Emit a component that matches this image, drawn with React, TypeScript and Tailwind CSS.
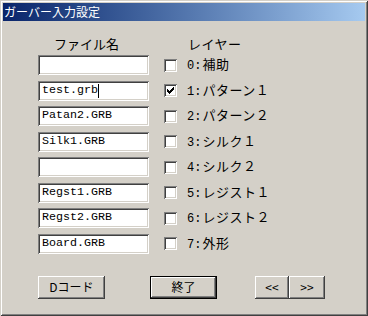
import React from "react";

const sunken =
  "shadow-[inset_1px_1px_#808080,inset_-1px_-1px_#ffffff,inset_2px_2px_#404040,inset_-2px_-2px_#d4d0c8]";
const raised =
  "shadow-[inset_-1px_-1px_#404040,inset_1px_1px_#ffffff,inset_-2px_-2px_#808080,inset_2px_2px_#d4d0c8]";

interface Row {
  file: string;
  num: string;
  name: string;
  checked?: boolean;
  focused?: boolean;
}

const rows: Row[] = [
  { file: "", num: "0:", name: "補助" },
  { file: "test.grb", num: "1:", name: "パターン１", checked: true, focused: true },
  { file: "Patan2.GRB", num: "2:", name: "パターン２" },
  { file: "Silk1.GRB", num: "3:", name: "シルク１" },
  { file: "", num: "4:", name: "シルク２" },
  { file: "Regst1.GRB", num: "5:", name: "レジスト１" },
  { file: "Regst2.GRB", num: "6:", name: "レジスト２" },
  { file: "Board.GRB", num: "7:", name: "外形" },
];

function Checkbox({ checked }: { checked?: boolean }) {
  return (
    <div className={`w-[13px] h-[13px] bg-white ${sunken} flex items-center justify-center`}>
      {checked && (
        <svg width="7" height="7" viewBox="0 0 7 7" shapeRendering="crispEdges">
          <path d="M0 2h1v1h1v1h1v-1h1v-1h1v-1h1v-1h1v3h-1v1h-1v1h-1v1h-1v1h-1v-1h-1v-1h-1v-1h-1z" fill="#000" />
        </svg>
      )}
    </div>
  );
}

function Button({ children, w, isDefault }: { children: React.ReactNode; w: string; isDefault?: boolean }) {
  const inner = (
    <div className={`h-full w-full bg-[#d4d0c8] ${raised} flex items-center justify-center text-[12px] text-black`}>
      {children}
    </div>
  );
  if (isDefault) {
    return <div className={`${w} h-[23px] border border-black`}>{inner}</div>;
  }
  return <div className={`${w} h-[23px]`}>{inner}</div>;
}

export default function App() {
  return (
    <div
      className={`w-[368px] h-[316px] bg-[#d4d0c8] p-[3px] shadow-[inset_1px_1px_#d4d0c8,inset_-1px_-1px_#404040,inset_2px_2px_#ffffff,inset_-2px_-2px_#808080] font-['Noto_Sans_CJK_JP',sans-serif]`}
    >
      <div className="h-[18px] bg-gradient-to-r from-[#0a246a] to-[#a6caf0] pl-[1px] text-[12px] leading-[18px] text-white">
        ガーバー入力設定
      </div>

      <div className="flex mt-[14px] h-[17px] text-[13px] leading-[17px] text-black">
        <div className="ml-[51px] w-[134px]">ファイル名</div>
        <div className="tracking-[0.5px]">レイヤー</div>
      </div>

      <div className="flex flex-col gap-[5.5px] mt-[3px] ml-[35px]">
        {rows.map((r, i) => (
          <div key={i} className="flex items-center h-[20px]">
            <div
              className={`w-[111px] h-[20px] bg-white ${sunken} pl-[4px] flex items-center font-['Liberation_Mono',monospace] text-[11.67px] text-black`}
            >
              <span>{r.file}</span>
              {r.focused && <span className="w-[1px] h-[14px] bg-black" />}
            </div>
            <div className="ml-[15px]">
              <Checkbox checked={r.checked} />
            </div>
            <div className="ml-[10px] flex items-baseline text-black leading-[20px]">
              <span className="font-['Liberation_Mono',monospace] text-[12px] mr-[1px]">{r.num}</span>
              <span className="text-[13px] tracking-[0.5px]">{r.name}</span>
            </div>
          </div>
        ))}
      </div>

      <div className="flex mt-[22px] ml-[35px]">
        <Button w="w-[67px]">Dコード</Button>
        <div className="ml-[45px]">
          <Button w="w-[67px]" isDefault>
            終了
          </Button>
        </div>
        <div className="ml-[38px] flex">
          <Button w="w-[34px]">&lt;&lt;</Button>
          <Button w="w-[36px]">&gt;&gt;</Button>
        </div>
      </div>
    </div>
  );
}
